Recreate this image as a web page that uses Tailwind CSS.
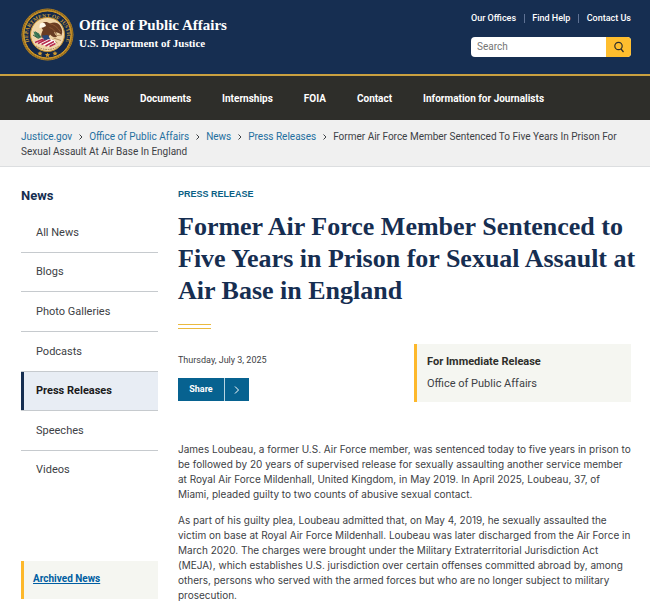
<!doctype html>
<html lang="en">
    <head>
        <meta charset="UTF-8" />
        <meta name="viewport" content="width=device-width, initial-scale=1.0" />
        <title>Office of Public Affairs | Press Release</title>
        <script src="https://cdn.jsdelivr.net/npm/@tailwindcss/browser@4"></script>
    </head>

    <body class="bg-white font-['Roboto',sans-serif] text-[11px] leading-[15px] text-[#3d4145]">
        <header class="flex h-[76px] items-start justify-between border-b-2 border-[#c9a040] bg-[#162e51] pr-[19px] pl-[21px] text-white">
            <a href="#" class="flex items-start pt-2">
                <svg class="size-[53px] shrink-0" viewBox="0 0 106 106" role="img" aria-label="Department of Justice seal">
                    <circle cx="53" cy="53" r="52" fill="#b98522" />
                    <circle cx="53" cy="53" r="50" fill="none" stroke="#5f4a20" stroke-width="2" stroke-dasharray="2 2" />
                    <circle cx="53" cy="53" r="47" fill="#14284a" />
                    <circle cx="53" cy="53" r="47" fill="none" stroke="#d49b2a" stroke-width="2" />
                    <defs>
                        <path id="ring" d="M24 79A39 36 0 1 1 82 79" />
                    </defs>
                    <text fill="#c49a3c" font-family="Liberation Serif, serif" font-size="11" font-weight="bold">
                        <textPath href="#ring" startOffset="50%" text-anchor="middle">DEPARTMENT OF JUSTICE</textPath>
                    </text>
                    <circle cx="53" cy="53" r="34" fill="#f0d5a8" stroke="#c8922d" stroke-width="2" />
                    <!-- olive branch and arrows -->
                    <path d="M25 47l10 3 6 8-5 3-8-4z" fill="#3f7d5a" />
                    <path d="M24 54l11 7M29 47l9 12" stroke="#2d5f46" stroke-width="2" />
                    <path d="M65 56l17-2M65 60l15 5M63 63l10 7" stroke="#a0764a" stroke-width="1.5" />
                    <!-- eagle -->
                    <path d="M42 31c6-5 11-3 16 0 8-4 16-2 20 4 4 6 6 13 3 19-5-4-9-6-15-5l6 9c-6 1-11-1-14-5l-5 9-12-3c-2-6 1-11 3-15-4-5-5-9-2-13z" fill="#693c22" />
                    <path d="M57 31c9 2 17 8 22 17M57 39c7 2 11 7 14 14" fill="none" stroke="#8b5933" stroke-width="2" />
                    <path d="M37 36c0-6 6-8 11-5l2 5-6 3-7 1z" fill="#fff8e9" />
                    <!-- shield stripes -->
                    <path d="M26 68l20-9 22 6 2 8-15 4z" fill="#fff" />
                    <path d="M28 69l17-7M34 71l18-9M41 73l18-9M49 76l17-9M57 77l12-6" stroke="#b52b4b" stroke-width="3" />
                    <path d="M42 55l12-1 4 8-12 2z" fill="#28487c" />
                    <path d="M30 76q23 14 46 0" fill="none" stroke="#9a7b52" stroke-width="2" stroke-dasharray="3 2" />
                    <g fill="#d29b2e">
                        <path id="star" d="M53 89l1.500 3 3.500.5-2.500 2.500.5 3.500-3-2-3 2 .5-3.500-2.500-2.500 3.500-.5z" />
                        <use href="#star" x="-15" y="-3" />
                        <use href="#star" x="15" y="-3" />
                    </g>
                </svg>
                <span class="ml-[5px] pt-2 font-['Liberation_Serif',serif] font-bold">
                    <span class="block text-[15px] leading-[18px]">Office of Public Affairs</span>
                    <span class="block text-[11px] leading-[18px]">U.S. Department of Justice</span>
                </span>
            </a>
            <div class="w-[160px] pt-3">
                <ul class="flex justify-between text-[9px] leading-[13px] font-medium">
                    <li><a href="#">Our Offices</a></li>
                    <li class="my-0.5 border-l border-[#5f7294]"></li>
                    <li><a href="#">Find Help</a></li>
                    <li class="my-0.5 border-l border-[#5f7294]"></li>
                    <li><a href="#">Contact Us</a></li>
                </ul>
                <form class="mt-3 flex h-5 overflow-hidden rounded-sm bg-white">
                    <label for="search" class="hidden">Search</label>
                    <input
                        type="search"
                        id="search"
                        placeholder="Search"
                        class="h-5 min-w-0 flex-1 px-1.5 text-[10px] leading-5 text-[#3d4145] placeholder:text-[#757575]"
                    />
                    <button type="submit" aria-label="Submit search" class="flex w-[25px] items-center justify-center bg-[#ffbe2e]">
                        <svg class="size-3" viewBox="0 0 12 12" fill="none" stroke="#2e2e2a" stroke-width="1.200">
                            <circle cx="5.500" cy="5" r="3.700" />
                            <path d="M8 8l2.500 3" />
                        </svg>
                    </button>
                </form>
            </div>
        </header>

        <nav class="h-11 bg-[#2e2e2a] px-[26px]">
            <ul class="flex h-full items-center gap-[31px] text-[10px] font-bold whitespace-nowrap text-white">
                <li><a href="#">About</a></li>
                <li><a href="#">News</a></li>
                <li><a href="#">Documents</a></li>
                <li><a href="#">Internships</a></li>
                <li><a href="#">FOIA</a></li>
                <li><a href="#">Contact</a></li>
                <li><a href="#">Information for Journalists</a></li>
            </ul>
        </nav>

        <nav aria-label="Breadcrumb" class="border-b border-[#dcdee0] bg-[#f0f0f0] pt-[9px] pr-[19px] pb-[7px] pl-[21px] text-[10px]">
            <a href="#" class="text-[#1f6f9f]">Justice.gov</a>
            <svg class="mx-1 inline h-1.5 w-1" viewBox="0 0 4 6" fill="none" stroke="currentColor"><path d="M.5.5L3 3 .5 5.500" /></svg>
            <a href="#" class="text-[#1f6f9f]">Office of Public Affairs</a>
            <svg class="mx-1 inline h-1.5 w-1" viewBox="0 0 4 6" fill="none" stroke="currentColor"><path d="M.5.5L3 3 .5 5.500" /></svg>
            <a href="#" class="text-[#1f6f9f]">News</a>
            <svg class="mx-1 inline h-1.5 w-1" viewBox="0 0 4 6" fill="none" stroke="currentColor"><path d="M.5.5L3 3 .5 5.500" /></svg>
            <a href="#" class="text-[#1f6f9f]">Press Releases</a>
            <svg class="mx-1 inline h-1.5 w-1" viewBox="0 0 4 6" fill="none" stroke="currentColor"><path d="M.5.5L3 3 .5 5.500" /></svg>
            <span>Former Air Force Member Sentenced To Five Years In Prison For Sexual Assault At Air Base In England</span>
        </nav>

        <div class="flex items-start gap-5 pt-5 pr-[19px] pl-[21px]">
            <aside class="w-[137px] shrink-0">
                <h2 class="text-[13px] leading-[18px] font-bold text-[#162e51]">News</h2>
                <ul class="mt-2 divide-y divide-[#c6cace] leading-[14px]">
                    <li><a href="#" class="block pt-[13px] pb-3 pl-[15px]">All News</a></li>
                    <li><a href="#" class="block py-3 pl-[15px]">Blogs</a></li>
                    <li><a href="#" class="block pt-[13px] pb-3 pl-[15px]">Photo Galleries</a></li>
                    <li><a href="#" class="block pt-[13px] pb-3 pl-[15px]">Podcasts</a></li>
                    <li><a href="#" class="block border-l-3 border-[#162e51] bg-[#e8edf4] py-3 pl-3 font-bold text-[#1b1b1b]">Press Releases</a></li>
                    <li><a href="#" class="block pt-[13px] pb-3 pl-[15px]">Speeches</a></li>
                    <li><a href="#" class="block py-3 pl-[15px]">Videos</a></li>
                </ul>
                <div class="mt-[72px] border-l-3 border-[#fdb82b] bg-[#f5f6f1] px-[9px] pt-2.5 pb-[13px]">
                    <a href="#" class="text-[10px] font-bold text-[#005ea2] underline">Archived News</a>
                </div>
            </aside>

            <main class="min-w-0 flex-1">
                <p class="font-['Liberation_Sans',sans-serif] text-[9px] leading-[14px] font-bold text-[#0b5f85]">PRESS RELEASE</p>
                <h1 class="-mr-2 mt-2.5 font-['Liberation_Serif',serif] text-[26px] leading-8 font-bold text-[#162e51]">
                    Former Air Force Member Sentenced to Five Years in Prison for Sexual Assault at Air Base in England
                </h1>
                <div class="mt-[17px] h-[5px] w-[33px] border-y border-[#eab93f]"></div>

                <div class="mt-[15px] flex justify-between">
                    <div class="pt-[9px]">
                        <p class="text-[9px]">Thursday, July 3, 2025</p>
                        <button type="button" class="mt-2.5 flex h-[23px] items-center bg-[#076290] text-[9px] font-bold text-white">
                            <span class="w-[46px]">Share</span>
                            <span class="flex h-full w-[25px] items-center justify-center border-l border-[#b9d5e2]">
                                <svg class="h-2 w-2" viewBox="0 0 8 8" fill="none" stroke="currentColor">
                                    <path d="M2 .5L5.500 4 2 7.500" />
                                </svg>
                            </span>
                        </button>
                    </div>
                    <div class="w-[217px] border-l-3 border-[#fdb82b] bg-[#f5f6f1] px-2.5 pt-2.5 pb-[11px]">
                        <p class="font-bold text-[#2e2e2a]">For Immediate Release</p>
                        <p class="mt-[7px]">Office of Public Affairs</p>
                    </div>
                </div>

                <article class="mt-10 space-y-[11px] font-['Inter',sans-serif] text-[10px]">
                    <p>
                        James Loubeau, a former U.S. Air Force member, was sentenced today to five years in prison to be followed by 20 years of supervised release for sexually assaulting another service member at Royal Air Force Mildenhall, United Kingdom, in May 2019. In April 2025, Loubeau, 37, of Miami, pleaded guilty to two counts of abusive sexual contact.
                    </p>
                    <p>
                        As part of his guilty plea, Loubeau admitted that, on May 4, 2019, he sexually assaulted the victim on base at Royal Air Force Mildenhall. Loubeau was later discharged from the Air Force in March 2020. The charges were brought under the Military Extraterritorial Jurisdiction Act (MEJA), which establishes U.S. jurisdiction over certain offenses committed abroad by, among others, persons who served with the armed forces but who are no longer subject to military prosecution.
                    </p>
                </article>
            </main>
        </div>
    </body>
</html>
